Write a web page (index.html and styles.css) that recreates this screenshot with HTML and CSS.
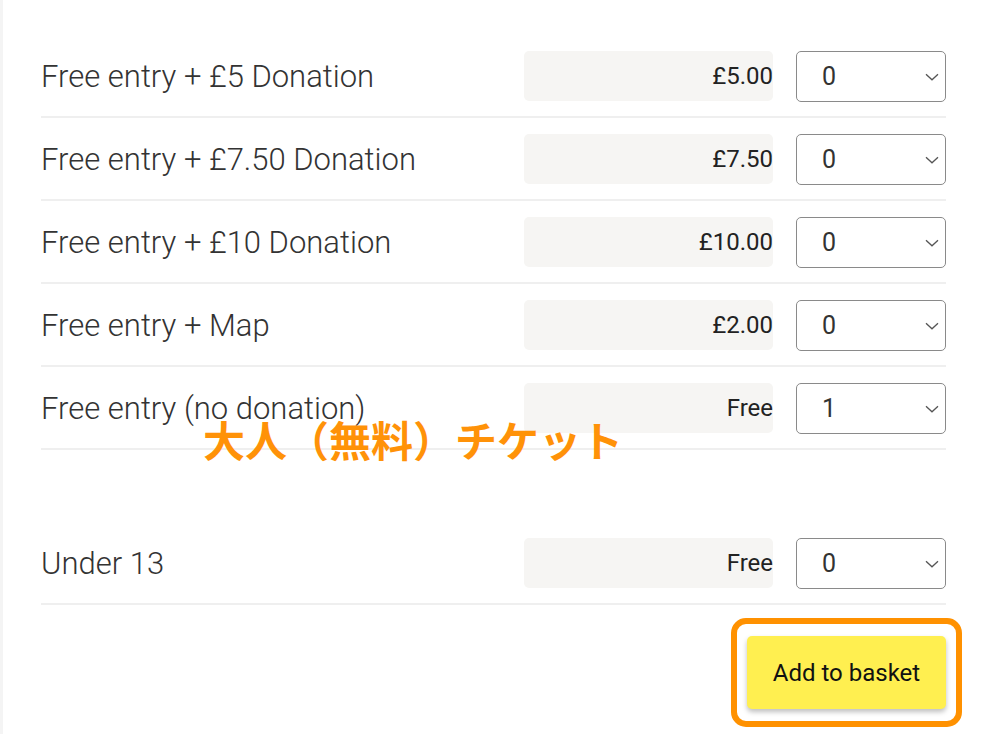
FILE: index.html
```html
<!DOCTYPE html>
<html lang="en">
<head>
<meta charset="utf-8">
<title>Tickets</title>
<link rel="stylesheet" href="styles.css">
</head>
<body>
<div class="page">
  <div class="tickets">
    <div class="group">
      <div class="row">
        <div class="label">Free entry + £5 Donation</div>
        <div class="price">£5.00</div>
        <div class="qty"><span class="val">0</span><svg class="chev" viewBox="0 0 14 8" width="14" height="8"><path d="M1 1.2 L7 6.8 L13 1.2" fill="none" stroke="#555" stroke-width="1.3"/></svg></div>
      </div>
      <div class="row">
        <div class="label">Free entry + £7.50 Donation</div>
        <div class="price">£7.50</div>
        <div class="qty"><span class="val">0</span><svg class="chev" viewBox="0 0 14 8" width="14" height="8"><path d="M1 1.2 L7 6.8 L13 1.2" fill="none" stroke="#555" stroke-width="1.3"/></svg></div>
      </div>
      <div class="row">
        <div class="label">Free entry + £10 Donation</div>
        <div class="price">£10.00</div>
        <div class="qty"><span class="val">0</span><svg class="chev" viewBox="0 0 14 8" width="14" height="8"><path d="M1 1.2 L7 6.8 L13 1.2" fill="none" stroke="#555" stroke-width="1.3"/></svg></div>
      </div>
      <div class="row">
        <div class="label">Free entry + Map</div>
        <div class="price">£2.00</div>
        <div class="qty"><span class="val">0</span><svg class="chev" viewBox="0 0 14 8" width="14" height="8"><path d="M1 1.2 L7 6.8 L13 1.2" fill="none" stroke="#555" stroke-width="1.3"/></svg></div>
      </div>
      <div class="row">
        <div class="label">Free entry (no donation)</div>
        <div class="price">Free</div>
        <div class="qty"><span class="val">1</span><svg class="chev" viewBox="0 0 14 8" width="14" height="8"><path d="M1 1.2 L7 6.8 L13 1.2" fill="none" stroke="#555" stroke-width="1.3"/></svg></div>
        <div class="note">大人（無料）チケット</div>
      </div>
    </div>
    <div class="group group-second">
      <div class="row">
        <div class="label">Under 13</div>
        <div class="price">Free</div>
        <div class="qty"><span class="val">0</span><svg class="chev" viewBox="0 0 14 8" width="14" height="8"><path d="M1 1.2 L7 6.8 L13 1.2" fill="none" stroke="#555" stroke-width="1.3"/></svg></div>
      </div>
    </div>
    <div class="actions">
      <div class="btn-wrap">
        <button class="btn">Add to basket</button>
      </div>
    </div>
  </div>
</div>
</body>
</html>
```
FILE: styles.css
```css
html, body {
  margin: 0;
  padding: 0;
  background: #ffffff;
}
body {
  font-family: Roboto, "Liberation Sans", Arial, sans-serif;
  color: #333333;
}
.page {
  width: 1000px;
  height: 734px;
  overflow: hidden;
  box-sizing: border-box;
  border-left: 3px solid #f4f4f4;
}
.tickets {
  padding: 35px 54px 0 38px;
}
.row {
  display: flex;
  align-items: center;
  padding: 16px 0 14px;
  border-bottom: 2px solid #efefef;
  position: relative;
}
.label {
  flex: 1;
  font-size: 31px;
  line-height: 1;
  font-weight: 300;
  color: #333;
  white-space: nowrap;
}
.price {
  width: 249px;
  height: 50px;
  box-sizing: border-box;
  background: #f6f5f3;
  border-radius: 5px;
  display: flex;
  align-items: center;
  justify-content: flex-end;
  font-size: 24px;
  color: #222;
  margin-bottom: 1px;
}
.qty {
  width: 150px;
  height: 51px;
  margin-left: 23px;
  box-sizing: border-box;
  border: 1px solid #8a8a8a;
  border-radius: 5px;
  display: flex;
  align-items: center;
  justify-content: space-between;
  padding: 0 6px 0 25px;
  font-size: 25px;
  color: #333;
}
.chev {
  display: block;
  margin-top: 1px;
}
.note {
  position: absolute;
  left: 162px;
  top: 57px;
  font-family: "Noto Sans CJK JP", sans-serif;
  font-weight: 700;
  font-size: 42px;
  line-height: 0.7;
  color: #ff9208;
  white-space: nowrap;
}
.group-second {
  margin-top: 72px;
}
.actions {
  display: flex;
  justify-content: flex-end;
  margin-top: 31px;
}
.btn-wrap {
  position: relative;
}
.btn-wrap::after {
  content: "";
  position: absolute;
  left: -16px;
  top: -18px;
  right: -16px;
  bottom: -18px;
  border: 6px solid #ff9100;
  border-radius: 15px;
  pointer-events: none;
}
.btn {
  display: block;
  width: 199px;
  height: 73px;
  border: none;
  border-radius: 5px;
  background: #ffef50;
  box-shadow: 0 3px 5px rgba(0, 0, 0, 0.25);
  font-family: Roboto, "Liberation Sans", Arial, sans-serif;
  font-size: 24px;
  color: #111;
  padding: 0;
}
```
